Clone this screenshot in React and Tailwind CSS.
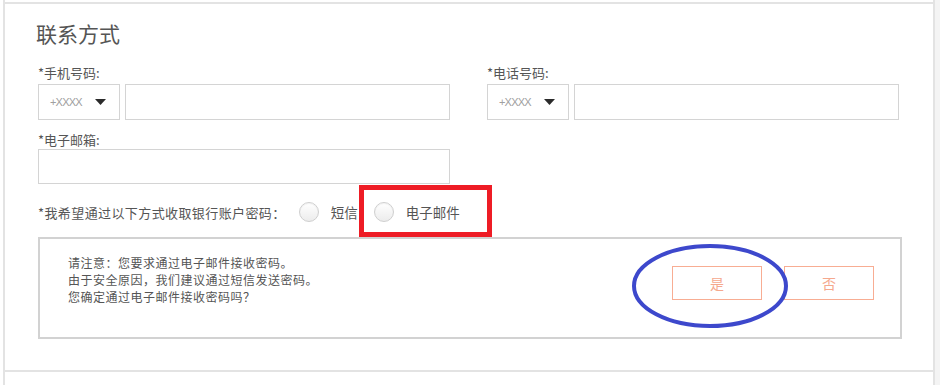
import React from "react";

const font = { fontFamily: '"Noto Sans CJK SC", "Liberation Sans", sans-serif' };

function CodeSelect() {
  return (
    <div className="flex h-[36px] w-[82px] shrink-0 items-center justify-between border border-[#d4d4d4] bg-white pl-[11px] pr-[13px]">
      <span className="text-[11px] tracking-[-0.8px] text-[#a0a0a0]" style={{ fontFamily: '"Liberation Sans", sans-serif' }}>+XXXX</span>
      <svg width="11" height="6" viewBox="0 0 11 6"><path d="M0 0 L11 0 L5.5 6 Z" fill="#2b2b2b" /></svg>
    </div>
  );
}

function PhoneField({ label }) {
  return (
    <div className="flex w-[412px] flex-col">
      <div className="h-[17px] text-[13px] leading-[17px] text-[#555]">{label}</div>
      <div className="mt-[3px] flex gap-[5px]">
        <CodeSelect />
        <div className="h-[36px] flex-1 border border-[#d4d4d4] bg-white" />
      </div>
    </div>
  );
}

function Radio({ label }) {
  return (
    <div className="flex items-center">
      <span className="h-[20px] w-[20px] rounded-full border border-[#cfcfcf] bg-gradient-to-b from-white to-[#ececec] shadow-[inset_0_1px_1px_rgba(0,0,0,0.05)]" />
      <span className="ml-[12px] text-[13.5px] leading-[17px] text-[#555]">{label}</span>
    </div>
  );
}

export default function App() {
  return (
    <div className="relative flex h-[385px] w-[940px] overflow-hidden bg-white" style={font}>
      <div className="ml-[3px] flex w-[932px] flex-col border-x-2 border-[#e3e3e3] pt-[2px]">
        <div className="h-[370px] border-y-2 border-[#e3e3e3] pl-[33px] pt-[15px]">
          <div className="ml-[-2px] text-[21px] leading-[28px] text-[#555]">联系方式</div>
          <div className="mt-[17px] flex gap-[37px]">
            <PhoneField label="*手机号码:" />
            <PhoneField label="*电话号码:" />
          </div>
          <div className="mt-[11px] h-[17px] text-[13px] leading-[17px] text-[#555]">*电子邮箱:</div>
          <div className="mt-[1px] h-[35px] w-[412px] border border-[#d4d4d4] bg-white" />
          <div className="mt-[18px] flex h-[20px] items-center">
            <span className="text-[13px] leading-[17px] tracking-[0.4px] text-[#555]">*我希望通过以下方式收取银行账户密码：</span>
            <div className="ml-[13px]"><Radio label="短信" /></div>
            <div className="ml-[16px]"><Radio label="电子邮件" /></div>
          </div>
          <div className="mt-[15px] flex h-[102px] w-[864px] items-start justify-between border-2 border-[#d2d2d2] pl-[28px] pr-[26px] pt-[15px]">
            <div className="text-[12px] leading-[17px] tracking-[0.5px] text-[#555]">
              <div>请注意：您要求通过电子邮件接收密码。</div>
              <div>由于安全原因，我们建议通过短信发送密码。</div>
              <div>您确定通过电子邮件接收密码吗？</div>
            </div>
            <div className="mt-[12px] flex gap-[22px]">
              <button className="flex h-[34px] w-[90px] items-center justify-center border border-[#f8ad93] text-[14px] text-[#f5a88d]">是</button>
              <button className="flex h-[34px] w-[90px] items-center justify-center border border-[#f8ad93] text-[14px] text-[#f5a88d]">否</button>
            </div>
          </div>
        </div>
      </div>
      <div className="w-[5px] bg-[#f4f4f4]" />
      {/* annotations */}
      <div className="pointer-events-none absolute left-[359px] top-[185px] h-[52px] w-[133px] border-[5px] border-[#ee1c25]" />
      <svg className="pointer-events-none absolute left-[630px] top-[242px]" width="160" height="88" viewBox="0 0 160 88">
        <ellipse cx="80" cy="44" rx="76" ry="40" fill="none" stroke="#3d48cc" strokeWidth="4" />
      </svg>
    </div>
  );
}
